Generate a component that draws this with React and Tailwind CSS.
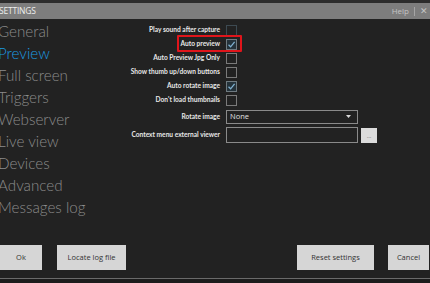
import React from 'react';

const navItems = ['General', 'Preview', 'Full screen', 'Triggers', 'Webserver', 'Live view', 'Devices', 'Advanced', 'Messages log'];

const Check = ({ checked, dim }) => (
  <div
    className={`w-[11px] h-[11px] border flex items-center justify-center ${
      dim ? 'border-[#3d4a52]' : checked ? 'border-[#6f7a80] bg-[#24323a]' : 'border-[#7a7a7a]'
    }`}
  >
    {checked && (
      <svg width="9" height="9" viewBox="0 0 9 9">
        <path d="M1.5 4.8 L3.6 6.8 L7.6 1.8" fill="none" stroke="#7fb0d0" strokeWidth="1.3" />
      </svg>
    )}
  </div>
);

const Label = ({ children }) => (
  <div className="w-[228px] flex justify-end pr-[6px]">
    <span className="text-[6.6px] font-bold text-[#e8e8e8] whitespace-nowrap" style={{ fontFamily: 'Lato, sans-serif' }}>
      {children}
    </span>
  </div>
);

const Row = ({ label, children }) => (
  <div className="flex items-center h-[14px]">
    <Label>{label}</Label>
    {children}
  </div>
);

export default function App() {
  return (
    <div
      className="w-[430px] h-[283px] bg-[#222222] flex flex-col overflow-hidden relative"
      style={{ fontFamily: '"Open Sans", "Noto Sans", sans-serif' }}
    >
      {/* Title bar */}
      <div className="h-[3px] bg-[#2c2c2c]" />
      <div className="h-[16px] bg-[#7d7d7d] flex items-center justify-between pl-0 pr-[2px]">
        <span className="text-[8.5px] text-[#eeeeee] tracking-tight -ml-[1px]">SETTINGS</span>
        <div className="flex items-center gap-[5px] text-[8px] text-[#c4c4c4]">
          <span>Help</span>
          <span className="w-px h-[9px] bg-[#a5a5a5]" />
          <span className="text-[9px]">✕</span>
        </div>
      </div>

      <div className="flex flex-1">
        {/* Nav */}
        <div className="w-[140px] flex flex-col pt-[1px] -ml-[2px]" style={{ fontFamily: 'Lato, sans-serif' }}>
          {navItems.map((item) => (
            <div
              key={item}
              className={`h-[22px] leading-[22px] text-[15.2px] font-light whitespace-nowrap ${
                item === 'Preview' ? 'text-[#1b9be0]' : 'text-[#8c8c8c]'
              }`}
            >
              {item}
            </div>
          ))}
        </div>

        {/* Form */}
        <div className="flex flex-col pt-[4px] -ml-[140px]">
          <Row label="Play sound after capture"><Check dim /></Row>
          <div className="relative">
            <Row label="Auto preview"><Check checked /></Row>
            <div className="absolute left-[179px] top-[-2px] w-[65px] h-[17px] border-2 border-[#e0151b] rounded-[1px]" />
          </div>
          <Row label="Auto Preview Jpg Only"><Check /></Row>
          <Row label="Show thumb up/down buttons"><Check /></Row>
          <Row label="Auto rotate image"><Check checked /></Row>
          <Row label="Don't load thumbnails"><Check /></Row>
          <div className="flex items-center h-[15px] mt-[2px]">
            <Label>Rotate image</Label>
            <div className="w-[132px] h-[14px] border border-[#8a8a8a] flex items-center justify-between pl-[3px] pr-[6px]">
              <span className="text-[7.5px] text-[#e0e0e0]">None</span>
              <svg width="5" height="3" viewBox="0 0 5 3"><path d="M0 0 L5 0 L2.5 3 Z" fill="#d8d8d8" /></svg>
            </div>
          </div>
          <div className="flex items-center h-[16px] mt-[3px]">
            <Label>Context menu external viewer</Label>
            <div className="w-[132px] h-[16px] border border-[#8a8a8a]" />
            <div className="ml-[3px] w-[16px] h-[15px] bg-[#dcdcdc] flex items-center justify-center mt-[1px]">
              <span className="text-[6px] text-[#666] leading-none">...</span>
            </div>
          </div>
        </div>
      </div>

      {/* Footer buttons */}
      <div className="flex items-center h-[25px] mb-[8px] pr-[1px]">
        <button className="w-[42px] h-[25px] bg-[#d6d6d6] text-[7.5px] text-[#333]">Ok</button>
        <button className="ml-[15px] w-[69px] h-[25px] bg-[#d6d6d6] text-[7.5px] text-[#333]">Locate log file</button>
        <div className="flex-1" />
        <button className="w-[77px] h-[25px] bg-[#d6d6d6] text-[7.5px] text-[#333]">Reset settings</button>
        <button className="ml-[14px] w-[41px] h-[25px] bg-[#d6d6d6] text-[7.5px] text-[#333]">Cancel</button>
      </div>
      <div className="h-px bg-[#6a6a6a]" />
      <div className="h-[4px] bg-[#1c1c1c]" />
    </div>
  );
}
